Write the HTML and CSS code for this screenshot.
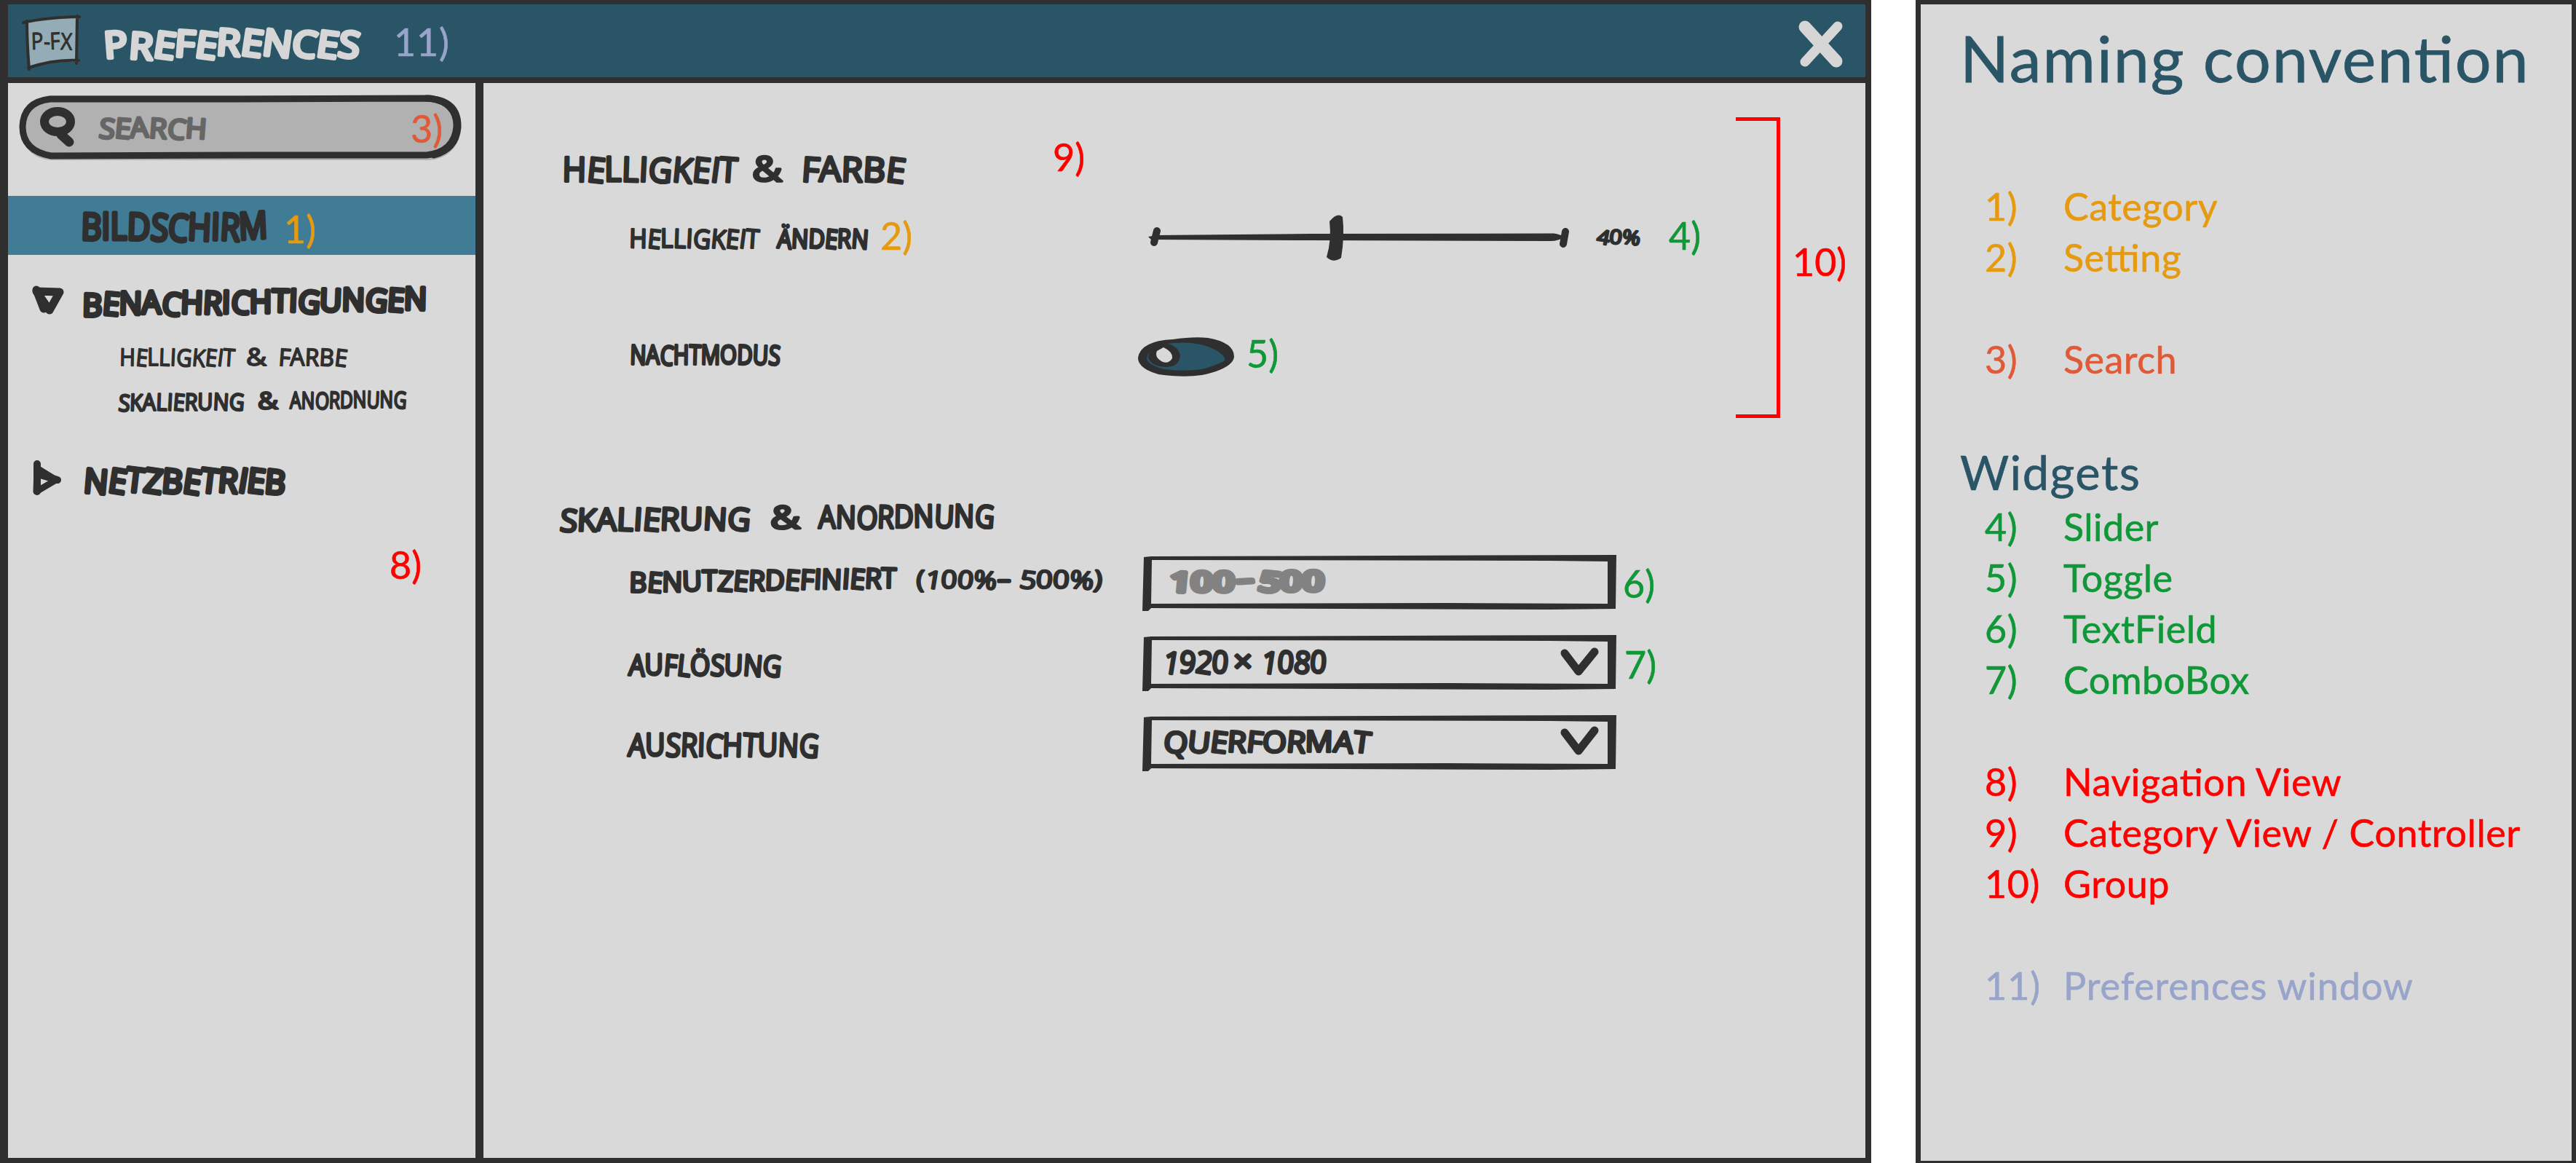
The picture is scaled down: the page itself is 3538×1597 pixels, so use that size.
FILE: index.html
```html
<!DOCTYPE html>
<html lang="de">
<head>
<meta charset="utf-8">
<title>Preferences</title>
<link rel="stylesheet" href="styles.css">
</head>
<body>
<div class="board">
  <section class="window">
    <header class="titlebar">
      <svg class="logo" width="84" height="80">
        <path d="M6 11 Q32 5 76 5 L74 66 Q44 64 9 74 Z" fill="#93acb6"/>
        <path d="M1 12 Q32 5 78 4 M75 3 L74 68 M77 64 Q44 62 8 74 M6 10 Q6 40 9 76" fill="none" stroke="#2f2f2f" stroke-width="4" stroke-linecap="round"/>
        <text class="pen thin" x="12" y="49" font-size="32" textLength="56" lengthAdjust="spacingAndGlyphs" rotate="-2 3 -3 2">P-FX</text>
      </svg>
      <svg class="title" width="370" height="100">
        <text class="pen marker light" x="6" y="71" font-size="50" textLength="348" lengthAdjust="spacingAndGlyphs" rotate="-4 4 8 4 8 4 8 7 8 8 8" dy="3 0 -2 -1 1 -3 0 0 1 1 0">PREFERENCES</text>
      </svg>
      <span class="note lilac note-window">11)</span>
      <svg class="close" width="70" height="70">
        <path d="M11 9 L54 56" stroke="#d6d6d6" stroke-width="17" stroke-linecap="round"/>
        <path d="M56 8 L11 57" stroke="#d6d6d6" stroke-width="13" stroke-linecap="round"/>
      </svg>
    </header>
    <div class="body">
      <nav class="sidebar">
        <div class="search">
          <svg width="82" height="89">
            <ellipse cx="52" cy="36" rx="18" ry="14" fill="none" stroke="#2f2f2f" stroke-width="12"/>
            <path d="M57 54 L68 64" stroke="#2f2f2f" stroke-width="13" stroke-linecap="round"/>
          </svg>
          <svg width="180" height="89">
            <text class="pen bold grey" x="26" y="58" font-size="38" textLength="148" lengthAdjust="spacingAndGlyphs" rotate="6 5 -2 4 8 4">SEARCH</text>
          </svg>
          <span class="note coral note-search">3)</span>
          <svg class="search-frame" width="610" height="92" viewBox="0 0 610 92">
            <path d="M43 7 L300 7 L565 6 Q602 12 601 45 Q598 80 560 84 L320 84 L44 85 Q5 78 5 45 Q6 11 43 7 Z" fill="none" stroke="#2f2f2f" stroke-width="9" stroke-linejoin="round"/>
            <path d="M560 6 Q604 8 603 46 Q600 76 570 84" fill="none" stroke="#2f2f2f" stroke-width="9" stroke-linecap="round"/>
          </svg>
        </div>
        <div class="nav-item selected">
          <svg width="379" height="81">
            <text class="pen marker" x="100" y="60" font-size="51" textLength="257" lengthAdjust="spacingAndGlyphs" rotate="2 0 0 2 6 6 3 2 4 -3">BILDSCHIRM</text>
          </svg>
          <span class="note amber note-category">1)</span>
        </div>
        <div class="nav-item">
          <svg width="600" height="80">
            <path d="M39 22 L71 23 L57 48 Z" fill="#d9d9d9" stroke="#2f2f2f" stroke-width="11" stroke-linejoin="round"/>
            <path d="M39 20 L49 46" stroke="#2f2f2f" stroke-width="11" stroke-linecap="round"/>
            <text class="pen marker" x="102" y="54" font-size="43" textLength="473" lengthAdjust="spacingAndGlyphs" transform="rotate(-.9 102 54)" rotate="2 6 2 0 8 3 4 2 8 1 2 3 7 3 2 7 5 2" dy="2 -2 0 0 1 -1 1 0 -1 1 -1 0 1 -1 0 0 1 -1">BENACHRICHTIGUNGEN</text>
          </svg>
        </div>
        <div class="nav-item sub">
          <svg width="600" height="60">
            <text class="pen" x="153" y="44" font-size="33"><tspan x="153" textLength="158" lengthAdjust="spacingAndGlyphs" rotate="1 6 0 2 3 5 6 6 8 4">HELLIGKEIT</tspan> <tspan x="327" textLength="28" lengthAdjust="spacingAndGlyphs">&amp;</tspan> <tspan x="371" textLength="94" lengthAdjust="spacingAndGlyphs" rotate="4 0 2 3 7">FARBE</tspan></text>
          </svg>
        </div>
        <div class="nav-item sub">
          <svg width="600" height="60">
            <text class="pen medium" x="151" y="46" font-size="32" transform="rotate(-.7 151 46)"><tspan x="151" textLength="173" lengthAdjust="spacingAndGlyphs" rotate="6 3 1 3 4 6 3 2 4 6">SKALIERUNG</tspan> <tspan x="343" textLength="28" lengthAdjust="spacingAndGlyphs">&amp;</tspan> <tspan x="387" textLength="160" lengthAdjust="spacingAndGlyphs" rotate="1 2 6 3 2 0 4 2 6">ANORDNUNG</tspan></text>
          </svg>
        </div>
        <div class="nav-item closed">
          <svg width="600" height="80">
            <path d="M40 26 L39 58 L66 42 Z" fill="#d9d9d9" stroke="#2f2f2f" stroke-width="9" stroke-linejoin="round"/>
            <path d="M40 20 L40 58 M44 35 L68 42" stroke="#2f2f2f" stroke-width="10" stroke-linecap="round"/>
            <text class="pen marker" x="103" y="58" font-size="46" textLength="277" lengthAdjust="spacingAndGlyphs" rotate="5 9 7 8 5 9 7 5 10 7 5" dy="1 -1 -1 1 1 0 -1 0 0 0 2">NETZBETRIEB</text>
          </svg>
        </div>
        <span class="note red note-nav">8)</span>
      </nav>
      <main class="content">
        <section class="group framed">
          <div class="rows">
            <div class="heading">
              <svg width="674" height="80">
                <text class="pen bold" x="0" y="66" font-size="47"><tspan x="0" textLength="240" lengthAdjust="spacingAndGlyphs" rotate="1 6 0 2 3 5 6 6 8 4">HELLIGKEIT</tspan> <tspan x="261" textLength="41" lengthAdjust="spacingAndGlyphs">&amp;</tspan> <tspan x="328" textLength="142" lengthAdjust="spacingAndGlyphs" rotate="4 0 2 3 7">FARBE</tspan></text>
              </svg>
              <span class="note red">9)</span>
            </div>
            <div class="row brightness">
              <div class="label">
                <svg width="350" height="70">
                  <text class="pen medium" x="5" y="50" font-size="36"><tspan x="5" textLength="178" lengthAdjust="spacingAndGlyphs" rotate="1 6 0 2 3 5 6 6 8 4">HELLIGKEIT</tspan> <tspan class="bold" x="208" textLength="125" lengthAdjust="spacingAndGlyphs" rotate="5 3 3 6 2 5">ÄNDERN</tspan></text>
                </svg>
                <span class="note amber">2)</span>
              </div>
              <svg width="733" height="70">
                <path d="M18 35 L30 33 L240 31 L575 30.500 Q584 32 590 35 Q582 41 570 41 L240 40 L22 39 Z" fill="#2f2f2f"/>
                <path d="M30 27 L26 43 M591 28 L588 45" stroke="#2f2f2f" stroke-width="10" stroke-linecap="round"/>
                <path d="M267 14 Q278 1 285 8 Q288 34 283 64 Q272 72 263 63 Q270 40 267 14 Z" fill="#2f2f2f"/>
                <text class="pen medium" x="633" y="44" font-size="27" textLength="60" lengthAdjust="spacingAndGlyphs" rotate="10 6 8">40%</text>
              </svg>
              <span class="note green">4)</span>
            </div>
            <div class="row night">
              <div class="label">
                <svg width="351" height="80">
                  <text class="pen bold" x="6" y="50" font-size="37" textLength="206" lengthAdjust="spacingAndGlyphs" rotate="2 0 6 1 2 1 0 2 3 6">NACHTMODUS</text>
                </svg>
              </div>
              <svg width="153" height="80">
                <path d="M4 41 Q8 18 52 16 Q80 12 100 14 Q136 20 136 40 Q134 56 92 65 Q66 69 32 64 Q4 56 4 41 Z" fill="#2f2f2f"/>
                <path d="M16 41 Q20 26 42 22 Q90 16 116 34 Q126 42 122 46 Q96 58 82 58 Q54 60 36 56 Q16 50 16 41 Z" fill="#2a5567"/>
                <path d="M18 41 Q20 22 40 21 Q60 24 62 39 Q60 54 42 54 Q22 53 18 41 Z" fill="#2f2f2f"/>
                <path d="M39 27 Q52 33 51 42 Q46 50 38 47 Q26 41 30 32 Z" fill="#d9d9d9"/>
              </svg>
              <span class="note green">5)</span>
            </div>
          </div>
          <div class="bracket"></div>
          <span class="note red note-group">10)</span>
        </section>
        <section class="group scaling">
          <div class="heading">
            <svg width="674" height="70">
              <text class="pen bold" x="-4" y="49" font-size="43" transform="rotate(-.6 0 49)"><tspan x="-4" textLength="262" lengthAdjust="spacingAndGlyphs" rotate="6 3 1 3 4 6 3 2 4 6">SKALIERUNG</tspan> <tspan x="286" textLength="41" lengthAdjust="spacingAndGlyphs">&amp;</tspan> <tspan x="352" textLength="241" lengthAdjust="spacingAndGlyphs" rotate="1 2 6 3 2 0 4 2 6">ANORDNUNG</tspan></text>
            </svg>
          </div>
          <div class="row field-row">
            <div class="label">
              <svg width="690" height="90">
                <text class="pen bold" x="5" y="56" font-size="38" textLength="367" lengthAdjust="spacingAndGlyphs" transform="rotate(-1 5 56)" rotate="2 6 2 0 1 5 6 4 3 6 5 4 3 5 6 4 2">BENUTZERDEFINIERT</text>
                <text class="pen medium" x="399" y="50" font-size="34" textLength="110" lengthAdjust="spacingAndGlyphs" rotate="2 8 4 6 6">(100%</text>
                <text class="pen bold" x="511" y="50" font-size="34" textLength="18" lengthAdjust="spacingAndGlyphs">-</text>
                <text class="pen medium" x="540" y="50" font-size="34" textLength="114" lengthAdjust="spacingAndGlyphs" rotate="8 4 4 6 5">500%)</text>
              </svg>
            </div>
            <div class="field">
              <svg width="651" height="76" viewBox="0 0 651 76">
                <path d="M2 3 L12 2 L651 0 L650 74 L560 75 L12 73 L8 77 L0 77 Z M13 7 L12 67 L420 66 L639 67 L639 9 L560 8 Z" fill="#2f2f2f" fill-rule="evenodd"/>
                <text class="pen heavy hint" x="36" y="50" font-size="38" textLength="90" lengthAdjust="spacingAndGlyphs" rotate="4 2 2">100</text>
                <text class="pen heavy hint" x="132" y="47" font-size="38" textLength="22" lengthAdjust="spacingAndGlyphs" rotate="-6">-</text>
                <text class="pen heavy hint" x="158" y="49" font-size="38" textLength="91" lengthAdjust="spacingAndGlyphs" rotate="8 3 2">500</text>
              </svg>
            </div>
            <span class="note green">6)</span>
          </div>
          <div class="row field-row">
            <div class="label">
              <svg width="690" height="90">
                <text class="pen bold" x="4" y="60" font-size="40" textLength="209" lengthAdjust="spacingAndGlyphs" rotate="4 0 5 7 2 5 2 5 7">AUFLÖSUNG</text>
              </svg>
            </div>
            <div class="field">
              <svg width="651" height="76" viewBox="0 0 651 76">
                <path d="M2 3 L12 2 L651 0 L650 74 L560 75 L12 73 L8 77 L0 77 Z M13 7 L12 67 L420 66 L639 67 L639 9 L560 8 Z" fill="#2f2f2f" fill-rule="evenodd"/>
                <text class="pen bold" y="51" font-size="42"><tspan x="27" textLength="90" lengthAdjust="spacingAndGlyphs" rotate="10 6 8 5">1920</tspan><tspan x="125" textLength="26" lengthAdjust="spacingAndGlyphs">×</tspan><tspan x="162" textLength="90" lengthAdjust="spacingAndGlyphs" rotate="9 5 7 4">1080</tspan></text>
                <path d="M580 25 L599 50 L621 23" fill="none" stroke="#2f2f2f" stroke-width="11" stroke-linecap="round" stroke-linejoin="round"/>
              </svg>
            </div>
            <span class="note green note-combo">7)</span>
          </div>
          <div class="row field-row">
            <div class="label">
              <svg width="690" height="90">
                <text class="pen bold" x="3" y="61" font-size="44" textLength="262" lengthAdjust="spacingAndGlyphs" rotate="5 0 5 3 2 7 2 4 1 3 6">AUSRICHTUNG</text>
              </svg>
            </div>
            <div class="field">
              <svg width="651" height="76" viewBox="0 0 651 76">
                <path d="M2 3 L12 2 L651 0 L650 74 L560 75 L12 73 L8 77 L0 77 Z M13 7 L12 67 L420 66 L639 67 L639 9 L560 8 Z" fill="#2f2f2f" fill-rule="evenodd"/>
                <text class="pen bold" x="28" y="50" font-size="40" textLength="284" lengthAdjust="spacingAndGlyphs" rotate="6 6 7 4 6 4 5 1 6 7">QUERFORMAT</text>
                <path d="M580 24 L599 49 L621 21" fill="none" stroke="#2f2f2f" stroke-width="11" stroke-linecap="round" stroke-linejoin="round"/>
              </svg>
            </div>
          </div>
        </section>
      </main>
    </div>
  </section>
  <aside class="legend">
    <h1>Naming convention</h1>
    <dl class="amber"><dt>1)</dt><dd>Category</dd><dt>2)</dt><dd>Setting</dd></dl>
    <dl class="coral"><dt>3)</dt><dd>Search</dd></dl>
    <h2>Widgets</h2>
    <dl class="green"><dt>4)</dt><dd>Slider</dd><dt>5)</dt><dd>Toggle</dd><dt>6)</dt><dd>TextField</dd><dt>7)</dt><dd>ComboBox</dd></dl>
    <dl class="red"><dt>8)</dt><dd>Navigation View</dd><dt>9)</dt><dd>Category View / Controller</dd><dt>10)</dt><dd>Group</dd></dl>
    <dl class="lilac"><dt>11)</dt><dd>Preferences window</dd></dl>
  </aside>
</div>
</body>
</html>
```
FILE: styles.css
```css
* { box-sizing: border-box; }

body {
  margin: 0;
  background: #fff;
  font-family: Lato, "Liberation Sans", sans-serif;
  color: #2f2f2f;
}

svg { display: block; flex: none; overflow: visible; }

.board { display: flex; justify-content: space-between; width: 3538px; height: 1597px; }

.window {
  display: flex;
  flex-direction: column;
  width: 2570px;
  border: solid #2f2f2f;
  border-width: 6px 8px 7px 11px;
  background: #d9d9d9;
}

/* Marker lettering: a thin face thickened with a round-joined stroke */
.pen {
  font-family: "Open Sans", "Noto Sans", sans-serif;
  font-weight: 400;
  fill: #2f2f2f;
  stroke: #2f2f2f;
  stroke-width: 1.8px;
  stroke-linejoin: round;
}
.pen.thin { stroke-width: 1px; }
.pen.medium { stroke-width: 2.6px; }
.pen.bold, .pen .bold { stroke-width: 3.6px; }
.pen.marker { stroke-width: 5.2px; }
.pen.heavy { font-weight: 600; stroke-width: 6px; }
.pen.light { fill: #d6d6d6; stroke: #d6d6d6; }
.pen.grey { fill: #666; stroke: #666; }
.pen.hint { fill: #828282; stroke: #828282; }

/* Numbered notes */
.note {
  flex: none;
  font-size: 52px;
  line-height: 64px;
  white-space: nowrap;
  -webkit-text-stroke: .6px currentColor;
}
.amber { color: #e69a0f; }
.coral { color: #e05a38; }
.green { color: #109738; }
.red { color: #f00; }
.lilac { color: #98a4ca; }

.titlebar {
  display: flex;
  align-items: flex-start;
  height: 108px;
  border-bottom: 8px solid #2f2f2f;
  background: #2a5567;
}
.logo { margin: 13px 0 0 20px; }
.title { margin-left: 23px; }
.note-window { margin: 19px 0 0 33px; letter-spacing: .8px; }
.close { margin: 22px 24px 0 auto; }

.body { display: flex; flex: 1; }

.sidebar {
  display: flex;
  flex-direction: column;
  width: 653px;
  border-right: 11px solid #2f2f2f;
}
.search {
  position: relative;
  display: flex;
  align-items: flex-start;
  width: 606px;
  height: 89px;
  margin: 17px 0 0 16px;
  border-radius: 45px;
  background: #b1b1b1;
}
.search-frame { position: absolute; left: -1px; top: -2px; }
.note-search { margin: 13px 0 0 275px; }
.nav-item { display: flex; align-items: flex-start; height: 80px; }
.nav-item.selected { height: 81px; margin: 49px 0 28px; background: #417c96; }
.nav-item.sub { height: 60px; }
.nav-item.closed { margin-top: 39px; }
.note-category { margin-top: 13px; }
.note-nav { margin: 46px 0 0 524px; }

.content { flex: 1; }
.heading { display: flex; align-items: flex-start; padding-left: 108px; }
.framed { display: flex; height: 460px; padding-top: 47px; }
.rows { width: 1720px; padding-top: 22px; }
.bracket {
  width: 61px;
  height: 413px;
  border: 5px solid #f00;
  border-left: 0;
}
.note-group { margin: 166px 0 0 17px; }

.row { display: flex; align-items: flex-start; padding-left: 195px; }
.label { display: flex; width: 700px; }
.brightness { height: 70px; margin-top: 27px; }
.brightness .note { margin-top: 1px; }
.night { height: 80px; margin-top: 90px; }
.night .note { margin-top: 3px; }

.scaling { padding-top: 106px; }
.scaling .heading { height: 77px; }
.field-row { height: 110px; }
.field { width: 670px; padding: 5px 0 0 10px; }
.field-row .note { margin-top: 12px; }
.field-row .note-combo { margin: 13px 0 0 2px; }

.legend {
  width: 907px;
  border: 6px solid #2f2f2f;
  border-left-width: 7px;
  border-bottom-width: 3px;
  padding: 20px 0 0 54px;
  background: #d9d9d9;
  font-feature-settings: "liga" 1;
  letter-spacing: .5px;
}
.legend h1 {
  margin: 0 0 116px;
  font-size: 88px;
  font-weight: 400;
  line-height: 106px;
  letter-spacing: 1.9px;
  color: #2a5567;
  white-space: nowrap;
  -webkit-text-stroke: .8px currentColor;
}
.legend h2 {
  margin: 80px 0 0;
  font-size: 65px;
  font-weight: 400;
  line-height: 80px;
  letter-spacing: 1.5px;
  color: #2a5567;
  -webkit-text-stroke: .6px currentColor;
}
.legend dl {
  display: grid;
  grid-template-columns: 108px 1fr;
  margin: 0 0 70px;
  padding-left: 34px;
  font-size: 52px;
  line-height: 70px;
  white-space: nowrap;
  -webkit-text-stroke: .6px currentColor;
}
.legend dd { margin: 0; }
.legend .coral { margin-bottom: 0; }
.legend .lilac { letter-spacing: 1px; }
.legend .red { letter-spacing: .6px; }
```
